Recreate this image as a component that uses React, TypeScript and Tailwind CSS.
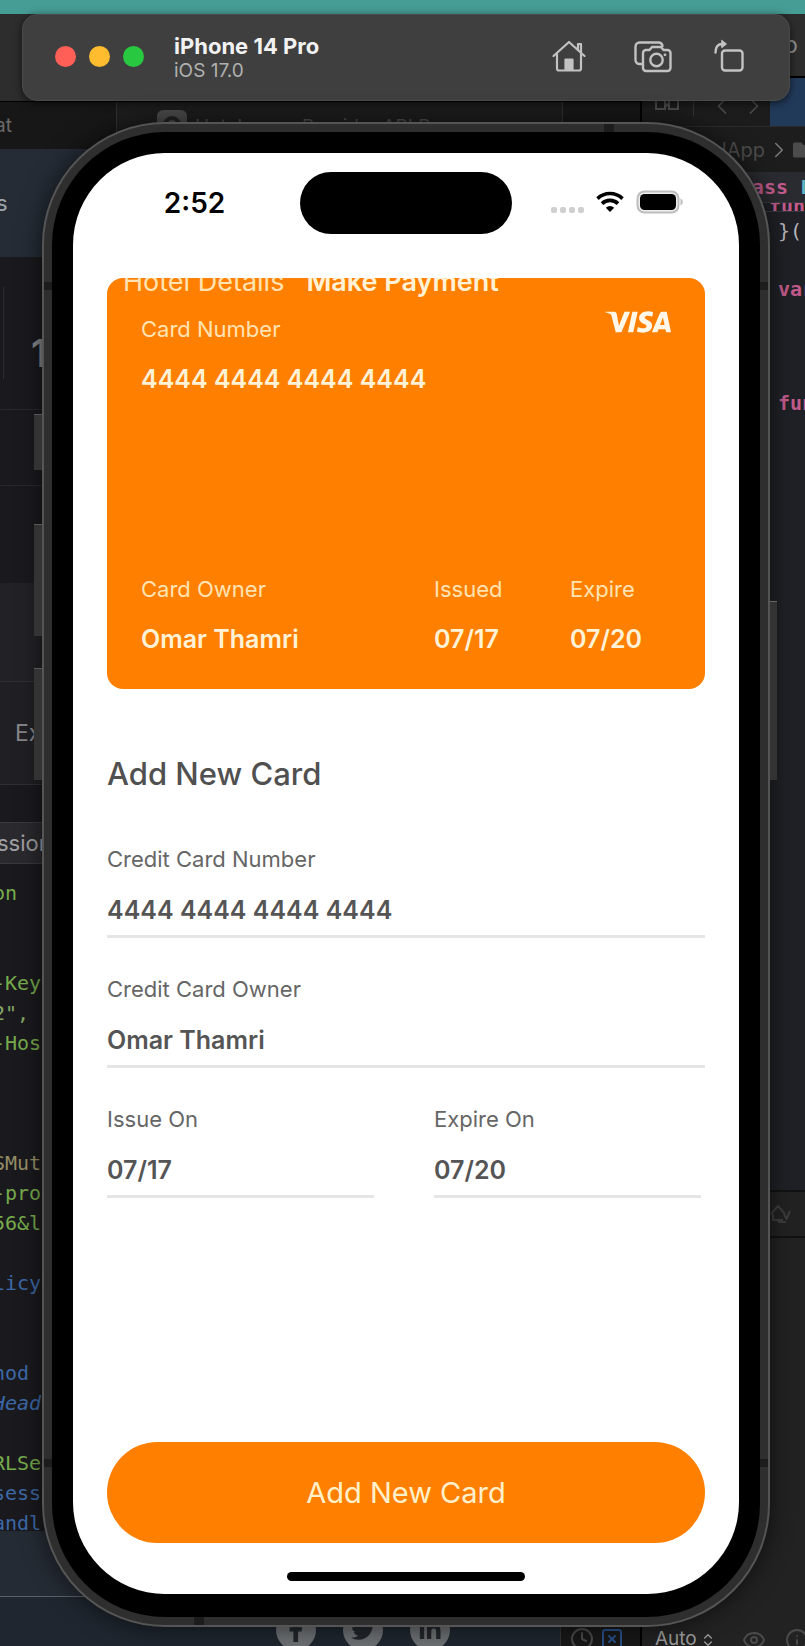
import React from "react";
import { SiVisa } from "react-icons/si";
import { FaFacebookF, FaTwitter, FaLinkedinIn, FaFolder } from "react-icons/fa";
import { Eye, Info, Clock, SquareX, ChevronLeft, ChevronRight, ChevronsUpDown } from "lucide-react";

const codeLines: { text: string; tone: string }[] = [
  { text: "on", tone: "text-[#77ab4c]" },
  { text: "", tone: "" },
  { text: "", tone: "" },
  { text: "-Key", tone: "text-[#77ab4c]" },
  { text: '2",', tone: "text-[#84a666]" },
  { text: "-Hos", tone: "text-[#77ab4c]" },
  { text: "", tone: "" },
  { text: "", tone: "" },
  { text: "", tone: "" },
  { text: "SMut", tone: "text-[#968d66]" },
  { text: "-pro", tone: "text-[#77ab4c]" },
  { text: "56&l", tone: "text-[#77ab4c]" },
  { text: "", tone: "" },
  { text: "licy", tone: "text-[#3d68a6]" },
  { text: "", tone: "" },
  { text: "", tone: "" },
  { text: "hod", tone: "text-[#3d68a6]" },
  { text: "Head", tone: "text-[#3d68a6] italic" },
  { text: "", tone: "" },
  { text: "RLSe", tone: "text-[#77ab4c]" },
  { text: "sess", tone: "text-[#3d68a6]" },
  { text: "andl", tone: "text-[#3d68a6]" },
];

function BrowserWindow() {
  return (
    <div className="flex min-w-0 flex-1 flex-col overflow-hidden bg-[#1a1a1e]">
      <div className="h-[87px] shrink-0 bg-[#2d2d2d]" />
      <div className="flex h-[48px] shrink-0 border-t border-black bg-[#171717] text-[19px] leading-[24px]">
        <div className="-ml-[5px] w-[121px] pt-[12px] text-[#6a6a6a]">at</div>
        <div className="flex flex-1 items-start gap-2 border-x border-[#303030] bg-[#1d1d1d] pt-[8px] pl-[40px] text-[#4a4a4a]">
          <span className="flex size-[30px] items-center justify-center rounded-md bg-[#4a4a4a]">
            <span className="size-[18px] rounded-full border-4 border-[#222]" />
          </span>
          <span className="pt-[5px]">Hotels.com Provider API P</span>
        </div>
        <div className="w-[77px]" />
      </div>
      <div className="-ml-[4px] flex h-[108px] shrink-0 items-center bg-[#252c36] text-[22px] text-[#a0a4aa]">s</div>
      <div className="flex h-[153px] shrink-0 border-b border-[#29292d] pt-[30px]">
        <div className="h-[92px] w-[4px] border-r border-[#2c2c30]" />
        <div className="pt-[43px] pl-[27px] text-[38px] leading-[46px] font-semibold text-[#88888c]">1</div>
      </div>
      <div className="h-[76px] shrink-0 border-b border-[#29292d]" />
      <div className="h-[97px] shrink-0" />
      <div className="h-[99px] shrink-0 border-b border-[#303034] bg-[#222226]" />
      <div className="h-[103px] shrink-0 border-b border-[#303034] bg-[#202024] pt-[36px] pl-[15px] text-[23px] leading-[30px] text-[#858589]">
        Ex
      </div>
      <div className="h-[37px] shrink-0" />
      <div className="-ml-[3px] flex h-[42px] shrink-0 items-center border-y border-[#3a3a3e] bg-[#2a2a2e] text-[22px] text-[#a0a0a4]">
        ssion
      </div>
      <div className="h-[667px] shrink-0 overflow-hidden pt-[14px]">
        <pre className="-ml-[7px] font-['DejaVu_Sans_Mono',monospace] text-[20px] leading-[30px]">
          {codeLines.map((line, i) => (
            <div key={i} className={"h-[30px] " + line.tone}>
              {line.text}
            </div>
          ))}
        </pre>
      </div>
      <div className="h-[66px] shrink-0 border-b border-[#5a6068] bg-[#252b34]" />
      <div className="flex flex-1 justify-end bg-[#1f262f]">
        <div className="flex gap-[27px] pt-[13px] pr-[110px] text-[24px] text-[#22262c]">
          {[FaFacebookF, FaTwitter, FaLinkedinIn].map((Icon, i) => (
            <span key={i} className="flex size-[40px] items-center justify-center rounded-full bg-[#6d7073]">
              <Icon />
            </span>
          ))}
        </div>
        <div className="flex w-[80px] gap-[6px] border-l border-[#333] bg-[#181818] pt-[30px] pl-[9px]">
          <Clock size={24} className="text-[#4a4a4a]" />
          <SquareX size={24} className="text-[#27508a]" />
        </div>
      </div>
    </div>
  );
}

function BreakpointIcon() {
  return (
    <svg width="22" height="22" viewBox="0 0 22 22" fill="none" stroke="currentColor" strokeWidth="2" strokeLinejoin="round" aria-hidden="true">
      <path d="M2 11 9 3l7 8M4 11v6h10M15 11l2.500 5L21 8M9 19h8" />
    </svg>
  );
}

function EditorWindow() {
  return (
    <div className="flex w-[165px] shrink-0 flex-col overflow-hidden border-l-2 border-black bg-[#202126] text-[20px]">
      <div className="flex h-[64px] shrink-0 items-center justify-end border-b-2 border-black bg-[#2d2d2d] pr-[7px] text-[24px] text-[#8a8a8a]">
        p
      </div>
      <div className="flex h-[48px] shrink-0 bg-[#1c1c1c] text-[#4c4c4c]">
        <div className="flex flex-1 items-start gap-[14px] pt-[14px] pl-[13px]">
          <svg width="24" height="24" viewBox="0 0 24 24" fill="none" stroke="currentColor" strokeWidth="2" aria-hidden="true">
            <path d="M1 7h9v10H1zM14 7h9v10h-9zM10 15l4-4" />
          </svg>
          <span className="h-[24px] w-px bg-[#333]" />
          <div className="flex gap-[4px]">
            <ChevronLeft size={28} strokeWidth={1.5} />
            <ChevronRight size={28} strokeWidth={1.5} />
          </div>
        </div>
        <div className="w-[35px] shrink-0 bg-[#223a5a]" />
      </div>
      <div className="flex h-[46px] shrink-0 items-center justify-end gap-px border-t border-[#2a2a2a] bg-[#1d1d1d] text-[#4c4c4c]">
        <span>HotelApp</span>
        <ChevronRight size={26} strokeWidth={1.5} className="text-[#777]" />
        <FaFolder className="-mr-2 shrink-0" />
      </div>
      <div className="flex flex-col font-['DejaVu_Sans_Mono',monospace] text-[20px] leading-[30px] font-bold text-[#c25b8c]">
        <div className="flex h-[30px] justify-end gap-[12px] bg-[#2a2b30]">
          <span>class</span>
          <span className="w-[5px] overflow-hidden text-[#5fb3c4]">L</span>
        </div>
        <div className="flex h-[10px] items-end justify-end overflow-hidden border-y border-[#38393e] leading-[10px]">
          fun
        </div>
        <div className="pt-[4px] pl-[136px] font-normal text-[#b8b8bc]">{"}("}</div>
        <div className="pt-[28px] pl-[136px]">var</div>
        <div className="pt-[84px] pl-[136px]">func</div>
      </div>
      <div className="flex-1" />
      <div className="flex h-[48px] shrink-0 items-center border-y-2 border-[#121212] bg-[#222] pl-[127px] text-[#3d3d3d]">
        <BreakpointIcon />
      </div>
      <div className="flex h-[408px] shrink-0 flex-col justify-end bg-[#222]">
        <div className="flex h-[24px] items-center gap-[3px] overflow-visible pt-[11px] pl-[13px] text-[#4a4a4a]">
          <span className="text-[19px] text-[#9a9a9a]">Auto</span>
          <ChevronsUpDown size={16} className="shrink-0 text-[#9a9a9a]" />
          <span className="mx-2 h-[20px] w-px bg-[#3a3a3a]" />
          <Eye size={24} className="mx-1 shrink-0" />
          <Info size={24} className="ml-3 shrink-0" />
        </div>
      </div>
    </div>
  );
}

function HomeIcon() {
  return (
    <svg width="34" height="34" viewBox="0 0 34 34" fill="none" stroke="currentColor" strokeWidth="2.200" strokeLinecap="round" strokeLinejoin="round" aria-hidden="true">
      <path d="M1.500 17 17 3l15.500 14" />
      <path d="M5 15v14.500a2 2 0 0 0 2 2h20a2 2 0 0 0 2-2V15" />
      <path d="M26 10.500V5h3v8.500" />
      <path d="M13.500 31V20.500h7V31z" fill="currentColor" />
    </svg>
  );
}

function ScreenshotIcon() {
  return (
    <svg width="38" height="34" viewBox="0 0 38 34" fill="none" stroke="currentColor" strokeWidth="2.400" strokeLinecap="round" strokeLinejoin="round" aria-hidden="true">
      <path d="M8 25H5.500a4 4 0 0 1-4-4V7.500a4 4 0 0 1 4-4h19a4 4 0 0 1 4 3.500" />
      <path d="M12 11h3.500l2.500-3h9l2.500 3h4a3 3 0 0 1 3 3v15a3 3 0 0 1-3 3H12a3 3 0 0 1-3-3V14a3 3 0 0 1 3-3z" />
      <circle cx="22.500" cy="21" r="6.200" />
      <circle cx="31" cy="15.800" r="1.400" fill="currentColor" stroke="none" />
    </svg>
  );
}

function RotateIcon() {
  return (
    <svg width="30" height="34" viewBox="0 0 30 34" fill="none" stroke="currentColor" strokeWidth="2.400" strokeLinecap="round" strokeLinejoin="round" aria-hidden="true">
      <rect x="8" y="11.500" width="20.500" height="20" rx="3" />
      <path d="M1.500 13.500C1.500 8 4 5 8.500 5" />
      <path d="M8 1.500 12.500 5 8 8.500z" fill="currentColor" strokeWidth="1" />
    </svg>
  );
}

function SimulatorBar() {
  return (
    <header className="mr-[15px] ml-[22px] flex h-[87px] items-center rounded-[15px] border border-[#4a4a4a] bg-[#3f3f3f] pr-[45px] pb-[2px] pl-[32px] shadow-[0_2px_8px_rgba(0,0,0,0.6)]">
      <div className="flex gap-[13px]">
        <button type="button" aria-label="Close" className="size-[21px] rounded-full bg-[#ff5f57]" />
        <button type="button" aria-label="Minimize" className="size-[21px] rounded-full bg-[#febc2e]" />
        <button type="button" aria-label="Zoom" className="size-[21px] rounded-full bg-[#28c840]" />
      </div>
      <div className="ml-[30px] flex-1 pt-[2px]">
        <h1 className="text-[22px] leading-[26px] font-bold text-[#f2f2f2]">iPhone 14 Pro</h1>
        <p className="text-[19px] leading-[24px] text-[#b0b0b0]">iOS 17.0</p>
      </div>
      <div className="flex items-center pb-[2px] text-[#c2c2c2]">
        <button type="button" aria-label="Home">
          <HomeIcon />
        </button>
        <button type="button" aria-label="Screenshot" className="ml-[48px]">
          <ScreenshotIcon />
        </button>
        <button type="button" aria-label="Rotate" className="ml-[42px]">
          <RotateIcon />
        </button>
      </div>
    </header>
  );
}

function StatusBar() {
  return (
    <div className="grid grid-cols-[1fr_212px_1fr] items-center">
      <div className="pl-[16px] text-center text-[28px] leading-[34px] font-semibold text-black">2:52</div>
      <div className="h-[62px] rounded-full bg-black" />
      <div className="flex items-center pl-[39px]">
        <div className="flex gap-[3px] pt-[14px]">
          {[0, 1, 2, 3].map((i) => (
            <span key={i} className="size-[6px] rounded-[2px] bg-[#cfcfcf]" />
          ))}
        </div>
        <svg width="28" height="22" viewBox="0 0 28 22" className="-mt-[2px] ml-[12px]" fill="none" stroke="#000" strokeWidth="3.600" aria-hidden="true">
          <path d="M1.500 7.600a18 18 0 0 1 25 0" />
          <path d="M6 12.600a11.500 11.500 0 0 1 16 0" />
          <path d="M14 21l-4.200-4.300a6 6 0 0 1 8.400 0z" fill="#000" stroke="none" />
        </svg>
        <svg width="48" height="24" viewBox="0 0 48 24" className="-mt-[2px] ml-[12px]" aria-hidden="true">
          <rect x="1.500" y="1.500" width="41" height="21" rx="7" fill="#eee" stroke="#bdbdbd" strokeWidth="2" />
          <rect x="4" y="4" width="36" height="16" rx="4.500" fill="#000" />
          <path d="M44.500 8.500c3 1.200 3 5.800 0 7z" fill="#bdbdbd" />
        </svg>
      </div>
    </div>
  );
}

function CardDetail({ label, value }: { label: string; value: string }) {
  return (
    <div className="flex flex-col gap-[21px]">
      <span className="text-[22px] leading-[28px] text-[#ffe3b3]">{label}</span>
      <span className="text-[25px] leading-[30px] font-semibold text-[#fff2d6]">{value}</span>
    </div>
  );
}

function PaymentCard() {
  return (
    <section className="mt-[44px] flex h-[411px] flex-col justify-between overflow-hidden rounded-[16px] bg-[#ff8000] pb-[35px]">
      <div>
        <nav className="-mt-[11px] flex gap-[22px] pl-[16px] text-[27px] leading-[30px]">
          <a href="#hotel" className="text-[#ffe3b3]">
            Hotel Details
          </a>
          <a href="#payment" className="font-semibold text-[#fff2d6]">
            Make Payment
          </a>
        </nav>
        <div className="mt-[18px] flex items-start justify-between px-[34px]">
          <CardDetail label="Card Number" value="4444 4444 4444 4444" />
          <SiVisa viewBox="0 8 24 8" className="-mt-[4px] h-[22px] w-[66px] text-[#fff8ea]" aria-label="Visa" />
        </div>
      </div>
      <div className="grid grid-cols-[293fr_136fr_101fr] px-[34px]">
        <CardDetail label="Card Owner" value="Omar Thamri" />
        <CardDetail label="Issued" value="07/17" />
        <CardDetail label="Expire" value="07/20" />
      </div>
    </section>
  );
}

function Field({ id, label, value }: { id: string; label: string; value: string }) {
  return (
    <div className="flex min-w-0 flex-col border-b-[3px] border-[#e5e5e5] pb-[10px]">
      <label htmlFor={id} className="text-[22px] leading-[28px] text-[#666]">
        {label}
      </label>
      <input
        id={id}
        defaultValue={value}
        className="mt-[22px] h-[30px] w-full bg-transparent text-[25px] leading-[30px] font-semibold text-[#555] outline-none"
      />
    </div>
  );
}

function Phone() {
  return (
    <div className="relative mt-[21px] mr-[35px] mb-[19px] ml-[42px] rounded-[123px] border-2 border-[#555] bg-[#2e2e2e] p-[8px] shadow-[0_0_24px_rgba(0,0,0,0.6)]">
      <span className="absolute top-[290px] -left-[10px] h-[56px] w-[8px] border-t border-[#555] bg-[#333]" />
      <span className="absolute top-[400px] -left-[10px] h-[112px] w-[8px] border-t border-[#555] bg-[#333]" />
      <span className="absolute top-[544px] -left-[10px] h-[112px] w-[8px] border-t border-[#555] bg-[#333]" />
      <span className="absolute top-[477px] -right-[9px] h-[179px] w-[7px] border-t border-[#666] bg-[#333]" />
      <span className="absolute top-[158px] left-0 h-[8px] w-[8px] bg-[#1c1c1c]" />
      <span className="absolute top-[158px] right-0 h-[8px] w-[8px] bg-[#1c1c1c]" />
      <span className="absolute bottom-[158px] left-0 h-[8px] w-[8px] bg-[#1c1c1c]" />
      <span className="absolute right-0 bottom-[158px] h-[8px] w-[8px] bg-[#1c1c1c]" />
      <span className="absolute top-0 right-[154px] h-[8px] w-[10px] bg-[#1c1c1c]" />
      <span className="absolute bottom-0 left-[150px] h-[8px] w-[10px] bg-[#1c1c1c]" />
      <div className="rounded-[113px] bg-black px-[21px] pt-[21px] pb-[23px]">
        <main className="rounded-[92px] bg-white pt-[19px] pb-[13px]">
          <StatusBar />
          <div className="px-[34px]">
            <PaymentCard />
            <form onSubmit={(e) => e.preventDefault()}>
              <h2 className="mt-[65px] text-[31px] leading-[40px] font-medium text-[#505050]">Add New Card</h2>
              <div className="mt-[51px] flex flex-col gap-[37px]">
                <Field id="number" label="Credit Card Number" value="4444 4444 4444 4444" />
                <Field id="owner" label="Credit Card Owner" value="Omar Thamri" />
                <div className="grid grid-cols-2 gap-[60px] pr-[4px]">
                  <Field id="issue" label="Issue On" value="07/17" />
                  <Field id="expire" label="Expire On" value="07/20" />
                </div>
              </div>
              <button type="submit" className="mt-[244px] h-[101px] w-full rounded-full bg-[#ff8000] text-[29px] leading-[36px] text-[#fff0cc]">
                Add New Card
              </button>
            </form>
          </div>
          <div className="mx-auto mt-[29px] h-[9px] w-[238px] rounded-full bg-black" />
        </main>
      </div>
    </div>
  );
}

export default function App() {
  return (
    <div className="relative min-h-screen overflow-hidden bg-[#469d95] font-['Inter',sans-serif]">
      <div aria-hidden="true" className="absolute inset-0 flex overflow-hidden border-t-[14px] border-[#469d95]">
        <BrowserWindow />
        <EditorWindow />
      </div>
      <div className="relative pt-[14px]">
        <SimulatorBar />
        <Phone />
      </div>
    </div>
  );
}
